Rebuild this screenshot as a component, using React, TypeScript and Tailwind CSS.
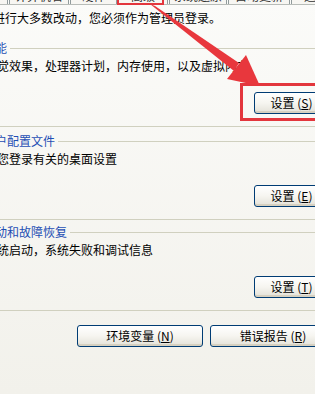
const tabs = [
  { label: "常规", w: "w-[60px]" },
  { label: "计算机名", w: "w-[60px]" },
  { label: "硬件", w: "w-[47px]" },
  { label: "高级", w: "w-[50px]" },
  { label: "系统还原", w: "w-[58px]" },
  { label: "自动更新", w: "w-[62px]" },
  { label: "远程", w: "w-[50px]" },
];

const XpButton = ({ label, hotkey, width }: { label: string; hotkey: string; width: string }) => (
  <button
    className={`${width} h-[22px] shrink-0 rounded-[3px] border border-[#003c74] bg-gradient-to-b from-[#ffffff] via-[#f6f5f0] to-[#e3e1d8] text-[12px] leading-[20px] text-black shadow-[inset_0_-2px_0_#d6d0c0]`}
  >
    {label} (<span className="underline">{hotkey}</span>)
  </button>
);

const Group = ({
  title,
  desc,
  hotkey,
  className,
}: {
  title: string;
  desc: string;
  hotkey: string;
  className?: string;
}) => (
  <fieldset className={`w-[365px] ml-[2px] border border-[#d0d0bf] rounded-[4px] pl-[8px] pb-[12px] ${className ?? ""}`}>
    <legend className="ml-[-2px] pr-[3px] text-[12px] leading-[14px] text-[#1f4fb4]">{title}</legend>
    <p className="mt-[4px] h-[14px] text-[12px] leading-[14px] text-black whitespace-nowrap">{desc}</p>
    <div className="mt-[19px] pl-[269px] flex h-[22px]">
      <XpButton label="设置" hotkey={hotkey} width="w-[75px]" />
    </div>
  </fieldset>
);

export default function App() {
  return (
    <div
      className="relative w-[315px] h-[394px] overflow-hidden bg-gradient-to-b from-[#fbfbf9] to-[#f2f1eb]"
      style={{ fontFamily: '"Noto Sans CJK SC", "Noto Sans", sans-serif' }}
    >
      {/* tab strip, mostly cut off */}
      <div className="flex h-[5px] ml-[-52px] border-b border-[#b8bcb8] overflow-hidden">
        {tabs.map((t) => (
          <div
            key={t.label}
            className={`${t.w} shrink-0 mr-[1px] border-x border-[#919b9c] bg-[#f7f6f2] flex justify-center overflow-hidden`}
          >
            <span className="mt-[-10px] text-[12px] leading-[12px] text-[#333]">{t.label}</span>
          </div>
        ))}
      </div>

      <div className="ml-[-26px] w-[370px]">
        <p className="mt-[6px] pl-[7px] text-[12px] leading-[14px] text-black whitespace-nowrap">
          要进行大多数改动，您必须作为管理员登录。
        </p>

        <Group
          className="mt-[16px]"
          title="性能"
          desc="视觉效果，处理器计划，内存使用，以及虚拟内存"
          hotkey="S"
        />
        <Group className="mt-[7px]" title="用户配置文件" desc="与您登录有关的桌面设置" hotkey="E" />
        <Group className="mt-[5px]" title="启动和故障恢复" desc="系统启动，系统失败和调试信息" hotkey="T" />

        <div className="mt-[14px] pl-[103px] flex gap-[7px]">
          <XpButton label="环境变量" hotkey="N" width="w-[126px]" />
          <XpButton label="错误报告" hotkey="R" width="w-[126px]" />
        </div>
      </div>

      {/* red annotations */}
      <div className="absolute left-[117px] top-[-3px] w-[47px] h-[8px] border-[2px] border-[#e3363d]" />
      <div className="absolute left-[240px] top-[83px] w-[90px] h-[38px] border-[3px] border-[#e3363d]" />
      <svg className="absolute left-0 top-0" width="315" height="394" viewBox="0 0 315 394">
        <polygon points="150,4 155,6 239,63 234,71" fill="#e8373d" />
        <polygon points="260,86 227,79 246,55" fill="#e8373d" />
      </svg>
    </div>
  );
}
